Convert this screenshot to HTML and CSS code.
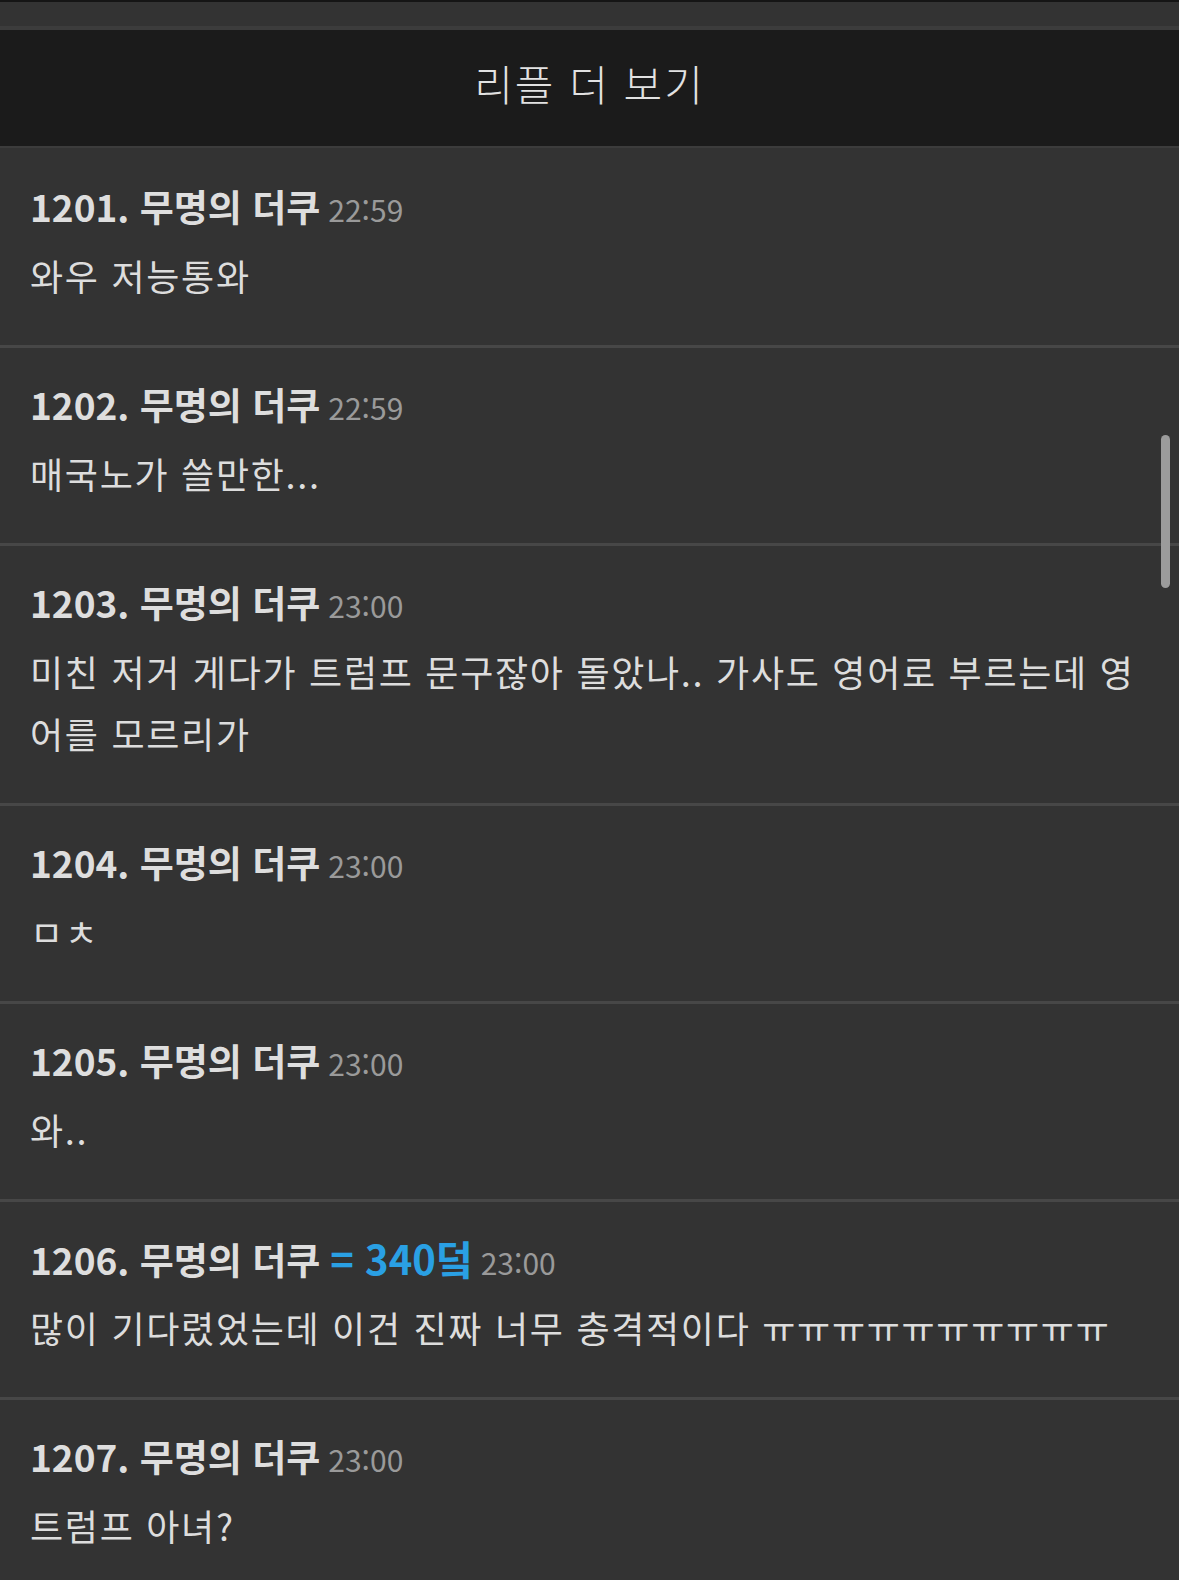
FILE: index.html
```html
<!DOCTYPE html>
<html lang="ko">
<head>
    <meta charset="UTF-8">
    <meta name="viewport" content="width=device-width, initial-scale=1.0">
    <title>리플 더 보기</title>
    <link rel="stylesheet" href="styles.css">
</head>
<body>
    <div id="topbar"></div>
    <div id="more-replies">리플 더 보기</div>
    <div id="comments">
        <div class="comment">
            <div class="comment-head"><span class="num">1201. 무명의 더쿠</span><span class="time">22:59</span></div>
            <div class="comment-body">와우 저능통와</div>
        </div>
        <div class="comment">
            <div class="comment-head"><span class="num">1202. 무명의 더쿠</span><span class="time">22:59</span></div>
            <div class="comment-body">매국노가 쓸만한...</div>
        </div>
        <div class="comment">
            <div class="comment-head"><span class="num">1203. 무명의 더쿠</span><span class="time">23:00</span></div>
            <div class="comment-body">미친 저거 게다가 트럼프 문구잖아 돌았나.. 가사도 영어로 부르는데 영어를 모르리가</div>
        </div>
        <div class="comment">
            <div class="comment-head"><span class="num">1204. 무명의 더쿠</span><span class="time">23:00</span></div>
            <div class="comment-body">ㅁㅊ</div>
        </div>
        <div class="comment">
            <div class="comment-head"><span class="num">1205. 무명의 더쿠</span><span class="time">23:00</span></div>
            <div class="comment-body">와..</div>
        </div>
        <div class="comment">
            <div class="comment-head"><span class="num">1206. 무명의 더쿠</span><span class="points">= 340덬</span><span class="time">23:00</span></div>
            <div class="comment-body">많이 기다렸었는데 이건 진짜 너무 충격적이다 ㅠㅠㅠㅠㅠㅠㅠㅠㅠㅠ</div>
        </div>
        <div class="comment">
            <div class="comment-head"><span class="num">1207. 무명의 더쿠</span><span class="time">23:00</span></div>
            <div class="comment-body">트럼프 아녀?</div>
        </div>
    </div>
    <div class="scroll-thumb"></div>
</body>
</html>
```

FILE: styles.css
```css
body {
    margin: 0;
    background-color: #333333;
    color: #dddddd;
    font-family: "Noto Sans CJK KR", "Noto Sans", sans-serif;
    overflow: hidden;
}
#topbar {
    height: 24px;
    background-color: #333333;
    border-top: 2px solid #151515;
    border-bottom: 4px solid #3c3c3c;
}
#more-replies {
    height: 104px;
    padding-bottom: 12px;
    background-color: #1b1b1b;
    border-bottom: 2px solid #3c3c3c;
    display: flex;
    align-items: center;
    justify-content: center;
    font-size: 42px;
    font-weight: 300;
    letter-spacing: 2px;
    color: #e2e2e2;
}
#comments {
    margin-top: 2px;
}
.comment {
    padding: 25px 30px 39px;
    border-bottom: 3px solid #474747;
}
.comment-head {
    line-height: 62px;
    height: 62px;
    white-space: nowrap;
}
.num {
    font-size: 37px;
    font-weight: bold;
    color: #dedede;
}
.points {
    margin-left: 10px;
    font-size: 40px;
    font-weight: bold;
    color: #2aa0e4;
}
.time {
    margin-left: 8px;
    font-size: 30px;
    color: #9a9a9a;
}
.comment-body {
    margin-top: 7px;
    font-size: 36px;
    letter-spacing: 1.7px;
    line-height: 62px;
    color: #dddddd;
}
.scroll-thumb {
    position: absolute;
    top: 435px;
    left: 1161px;
    width: 9px;
    height: 153px;
    border-radius: 5px;
    background-color: #9b9b9b;
}
```
